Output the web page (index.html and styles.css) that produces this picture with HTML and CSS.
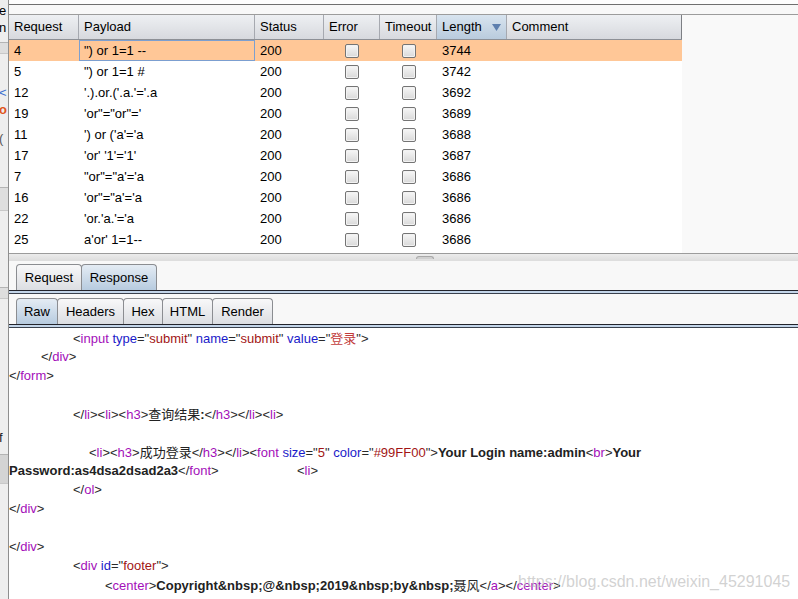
FILE: index.html
```html
<!DOCTYPE html>
<html>
<head>
<meta charset="utf-8">
<link rel="stylesheet" href="styles.css">
</head>
<body>
<div class="app">
  <div class="side">
    <div class="sf sf-e">e</div>
    <div class="sf sf-n">n</div>
    <div class="sbar"></div>
    <div class="sf sf-blue">&lt;</div>
    <div class="sf sf-orange">o</div>
    <div class="sf sf-par">(</div>
    <div class="sbar tall"></div>
    <div class="sspace"></div>
    <div class="sbar"></div>
    <div class="sspace"></div>
    <div class="sf sf-f">f</div>
    <div class="sbar dark"></div>
  </div>
  <div class="main">
    <div class="topstrip"></div>
    <div class="gap1"></div>
    <div class="table">
      <div class="grid">
        <div class="thead">
          <div class="th">Request</div>
          <div class="th">Payload</div>
          <div class="th">Status</div>
          <div class="th">Error</div>
          <div class="th">Timeout</div>
          <div class="th sorted"><span>Length</span><svg class="arrow" width="9" height="7" viewBox="0 0 9 7"><path d="M0 0H9L4.5 7Z" fill="#5d7fae"/></svg></div>
          <div class="th">Comment</div>
        </div>
        <div class="row sel"><div class="td">4</div><div class="td focus">") or 1=1 --</div><div class="td">200</div><div class="td cbc"><span class="cb"></span></div><div class="td cbc"><span class="cb"></span></div><div class="td">3744</div><div class="td"></div></div>
        <div class="row"><div class="td">5</div><div class="td">") or 1=1 #</div><div class="td">200</div><div class="td cbc"><span class="cb"></span></div><div class="td cbc"><span class="cb"></span></div><div class="td">3742</div><div class="td"></div></div>
        <div class="row"><div class="td">12</div><div class="td">'.).or.('.a.'='.a</div><div class="td">200</div><div class="td cbc"><span class="cb"></span></div><div class="td cbc"><span class="cb"></span></div><div class="td">3692</div><div class="td"></div></div>
        <div class="row"><div class="td">19</div><div class="td">'or"="or"='</div><div class="td">200</div><div class="td cbc"><span class="cb"></span></div><div class="td cbc"><span class="cb"></span></div><div class="td">3689</div><div class="td"></div></div>
        <div class="row"><div class="td">11</div><div class="td">') or ('a'='a</div><div class="td">200</div><div class="td cbc"><span class="cb"></span></div><div class="td cbc"><span class="cb"></span></div><div class="td">3688</div><div class="td"></div></div>
        <div class="row"><div class="td">17</div><div class="td">'or' '1'='1'</div><div class="td">200</div><div class="td cbc"><span class="cb"></span></div><div class="td cbc"><span class="cb"></span></div><div class="td">3687</div><div class="td"></div></div>
        <div class="row"><div class="td">7</div><div class="td">"or"="a'='a</div><div class="td">200</div><div class="td cbc"><span class="cb"></span></div><div class="td cbc"><span class="cb"></span></div><div class="td">3686</div><div class="td"></div></div>
        <div class="row"><div class="td">16</div><div class="td">'or"="a'='a</div><div class="td">200</div><div class="td cbc"><span class="cb"></span></div><div class="td cbc"><span class="cb"></span></div><div class="td">3686</div><div class="td"></div></div>
        <div class="row"><div class="td">22</div><div class="td">'or.'a.'='a</div><div class="td">200</div><div class="td cbc"><span class="cb"></span></div><div class="td cbc"><span class="cb"></span></div><div class="td">3686</div><div class="td"></div></div>
        <div class="row"><div class="td">25</div><div class="td">a'or' 1=1--</div><div class="td">200</div><div class="td cbc"><span class="cb"></span></div><div class="td cbc"><span class="cb"></span></div><div class="td">3686</div><div class="td"></div></div>
      </div>
    </div>
    <div class="divider"><span class="handle"></span></div>
    <div class="gap2"></div>
    <div class="tabs">
      <div class="tab w-req">Request</div>
      <div class="tab w-resp on">Response</div>
    </div>
    <div class="band"></div>
    <div class="tabs inner">
      <div class="tab w-raw on">Raw</div>
      <div class="tab w-hdr">Headers</div>
      <div class="tab w-hex">Hex</div>
      <div class="tab w-html">HTML</div>
      <div class="tab w-rnd">Render</div>
    </div>
    <div class="band"></div>
    <div class="code">
<div class="ln">&#9;&#9;&lt;<span class="n">input</span> <span class="a">type</span>="<span class="v">submit</span>" <span class="a">name</span>="<span class="v">submit</span>" <span class="a">value</span>="<span class="v cn">登录</span>"&gt;</div>
<div class="ln">&#9;&lt;/<span class="n">div</span>&gt;</div>
<div class="ln">&lt;/<span class="n">form</span>&gt;</div>
<div class="ln"> </div>
<div class="ln">&#9;&#9;&lt;/<span class="n">li</span>&gt;&lt;<span class="n">li</span>&gt;&lt;<span class="n">h3</span>&gt;<span class="x"><span class="cn">查询结果</span>:</span>&lt;/<span class="n">h3</span>&gt;&lt;/<span class="n">li</span>&gt;&lt;<span class="n">li</span>&gt;</div>
<div class="ln"> </div>
<div class="ln half">&#9;&#9;&lt;<span class="n">li</span>&gt;&lt;<span class="n">h3</span>&gt;<span class="x cn">成功登录</span>&lt;/<span class="n">h3</span>&gt;&lt;/<span class="n">li</span>&gt;&lt;<span class="n">font</span> <span class="a">size</span>="<span class="v">5</span>" <span class="a">color</span>="<span class="v">#99FF00</span>"&gt;<span class="x">Your Login name:admin</span>&lt;<span class="n">br</span>&gt;<span class="x">Your</span></div>
<div class="ln"><span class="x">Password:as4dsa2dsad2a3</span>&lt;/<span class="n">font</span>&gt;&#9;&#9;&#9;&lt;<span class="n">li</span>&gt;</div>
<div class="ln">&#9;&#9;&lt;/<span class="n">ol</span>&gt;</div>
<div class="ln">&lt;/<span class="n">div</span>&gt;</div>
<div class="ln"> </div>
<div class="ln">&lt;/<span class="n">div</span>&gt;</div>
<div class="ln">&#9;&#9;&lt;<span class="n">div</span> <span class="a">id</span>="<span class="v">footer</span>"&gt;</div>
<div class="ln">&#9;&#9;&#9;&lt;<span class="n">center</span>&gt;<span class="x">Copyright&amp;nbsp;@&amp;nbsp;2019&amp;nbsp;by&amp;nbsp;</span><span class="cn">聂风</span>&lt;/<span class="n">a</span>&gt;&lt;/<span class="n">center</span>&gt;</div>
      <div class="wm">https://blog.csdn.net/weixin_45291045</div>
    </div>
  </div>
</div>
</body>
</html>
```

FILE: styles.css
```css
* { box-sizing: border-box; margin: 0; padding: 0; }
html, body { width: 798px; height: 599px; overflow: hidden; }
body {
  font-family: "Liberation Sans", Arial, sans-serif;
  font-size: 13px;
  color: #000;
  background: #f7f7f7;
}
.app { display: flex; height: 599px; }

/* fragment of the window behind */
.side {
  width: 9px;
  flex: none;
  background: #eeeeee;
  border-right: 1px solid #8e8e8e;
  overflow: hidden;
  display: flex;
  flex-direction: column;
}
.sf { height: 17px; line-height: 17px; font-size: 13px; margin-left: -1px; white-space: nowrap; }
.sf-e { margin-top: 2px; }
.sf-n { margin-top: 0; }
.sf-blue { color: #3b6fd0; margin-top: 30px; }
.sf-orange { color: #e0561c; font-weight: bold; }
.sf-par { color: #555; margin-top: 12px; }
.sf-f { color: #222; margin-top: 60px; }
.sbar { height: 12px; margin-top: 6px; background: #dedede; border-top: 1px solid #b4b4b4; border-bottom: 1px solid #c8c8c8; }
.sbar.tall { height: 24px; margin-top: 40px; }
.sbar.dark { height: 30px; background: #d4d4d4; margin-top: 8px; }
.sspace { height: 70px; }

.main {
  flex: 1;
  min-width: 0;
  display: flex;
  flex-direction: column;
  background: #f8f8f8;
  position: relative;
}
.topstrip { height: 5px; background: #fdfdfd; border-bottom: 1px solid #6f6f6f; flex: none; }
.gap1 { height: 9px; flex: none; }

.table {
  height: 240px;
  flex: none;
  border-top: 1px solid #9c9c9c;
  border-bottom: 1px solid #9c9c9c;
  background: #f9f9f9;
}
.grid { width: 673px; height: 238px; background: #fff; }
.thead, .row {
  display: grid;
  grid-template-columns: 70px 176px 69px 56px 57px 70px 175px;
}
.thead { height: 25px; border-bottom: 1px solid #8d9096; }
.th {
  height: 24px;
  line-height: 24px;
  padding-left: 5px;
  background: linear-gradient(#eef0f3, #d7d9de);
  border-right: 1px solid #a6a9b0;
  white-space: nowrap;
  overflow: hidden;
}
.th:last-child { border-right-color: #7d7f84; }
.th.sorted {
  background: linear-gradient(#d8e4ef, #b9cbdd);
  display: flex;
  align-items: center;
  justify-content: space-between;
  padding-right: 5px;
}
.arrow { display: block; }

.row { height: 21px; line-height: 21px; }
.row.sel { background: #ffc797; }
.td { padding-left: 5px; white-space: nowrap; overflow: hidden; }
.td.focus { border: 1px solid #7c9fd0; line-height: 19px; padding-left: 4px; }
.td.cbc { padding-left: 0; display: flex; align-items: center; justify-content: center; }
.cb {
  display: block;
  width: 14px;
  height: 14px;
  border: 1px solid #747474;
  border-radius: 2px;
  background: linear-gradient(#f7f7f7, #d9d9d9);
  box-shadow: inset 0 0 0 1px #f2f2f2;
}

.divider {
  height: 7px;
  flex: none;
  background: linear-gradient(#ececec, #dddddd);
  padding-left: 407px;
}
.handle {
  display: block;
  width: 18px;
  height: 3px;
  margin-top: 2px;
  background: #d0d0d0;
  border: 1px solid #a9a9a9;
  border-bottom: none;
  border-radius: 3px 3px 0 0;
}
.gap2 { height: 3px; flex: none; }

.tabs { display: flex; height: 26px; padding-left: 7px; flex: none; }
.tabs.inner { margin-top: 4px; }
.tab {
  height: 26px;
  line-height: 25px;
  text-align: center;
  border: 1px solid #8b8d91;
  border-bottom: none;
  border-radius: 4px 4px 0 0;
  background: linear-gradient(#f8f8f9, #dcdee2);
  margin-right: -1px;
  white-space: nowrap;
}
.tab.on { background: linear-gradient(#e4ecf4, #b7cbdf); }
.w-req { width: 66px; }
.w-resp { width: 76px; }
.w-raw { width: 42px; }
.w-hdr { width: 67px; }
.w-hex { width: 40px; }
.w-html { width: 51px; }
.w-rnd { width: 61px; }
.band {
  height: 4px;
  flex: none;
  border-top: 1px solid #22232b;
  background: #c3d5e9;
  border-bottom: 1px solid #3a414d;
}

.code {
  flex: 1;
  background: #fff;
  position: relative;
  overflow: hidden;
  color: #2a2a2a;
}
.ln { height: 19px; line-height: 19px; white-space: pre; tab-size: 32px; -moz-tab-size: 32px; }
.ln.half { padding-left: 16px; }
.n { color: #a30fb9; }
.a { color: #1b1bc9; }
.v { color: #a21515; }
.x { font-weight: bold; color: #222; }
.cn { font-family: "Noto Sans CJK SC", "Liberation Sans", sans-serif; font-weight: normal; }
.v.cn { color: #c23b3b; }
.wm {
  position: absolute;
  left: 509px;
  top: 245px;
  font-size: 16px;
  line-height: 18px;
  color: rgba(195, 195, 195, 0.75);
  white-space: nowrap;
}
```
